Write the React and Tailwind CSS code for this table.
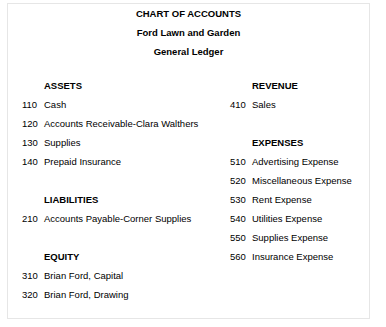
import React from "react";

const left = [
  { heading: "ASSETS" },
  { no: "110", name: "Cash" },
  { no: "120", name: "Accounts Receivable-Clara Walthers" },
  { no: "130", name: "Supplies" },
  { no: "140", name: "Prepaid Insurance" },
  {},
  { heading: "LIABILITIES" },
  { no: "210", name: "Accounts Payable-Corner Supplies" },
  {},
  { heading: "EQUITY" },
  { no: "310", name: "Brian Ford, Capital" },
  { no: "320", name: "Brian Ford, Drawing" },
];

const right = [
  { heading: "REVENUE" },
  { no: "410", name: "Sales" },
  {},
  { heading: "EXPENSES" },
  { no: "510", name: "Advertising Expense" },
  { no: "520", name: "Miscellaneous Expense" },
  { no: "530", name: "Rent Expense" },
  { no: "540", name: "Utilities Expense" },
  { no: "550", name: "Supplies Expense" },
  { no: "560", name: "Insurance Expense" },
];

function Row({ row }) {
  if (row.heading) {
    return <div className="h-[19px] pl-[22px] font-bold">{row.heading}</div>;
  }
  if (!row.no) return <div className="h-[19px]" />;
  return (
    <div className="flex h-[19px]">
      <span className="w-[22px] shrink-0">{row.no}</span>
      <span className="whitespace-nowrap">{row.name}</span>
    </div>
  );
}

export default function App() {
  return (
    <div className="bg-white pl-[7px] pt-[3px] font-['Liberation_Sans',Arial,sans-serif] text-[9.5px] leading-[19px] text-black">
      <div className="w-[363px] border border-[#e6e6e6] pb-[14px]">
        <div className="text-center font-bold">
          <div>CHART OF ACCOUNTS</div>
          <div>Ford Lawn and Garden</div>
          <div>General Ledger</div>
        </div>

        <div className="mt-[15px] grid grid-cols-[208px_1fr] pl-[14px]">
          <div>
            {left.map((r, i) => (
              <Row key={i} row={r} />
            ))}
          </div>
          <div>
            {right.map((r, i) => (
              <Row key={i} row={r} />
            ))}
          </div>
        </div>
      </div>
    </div>
  );
}
